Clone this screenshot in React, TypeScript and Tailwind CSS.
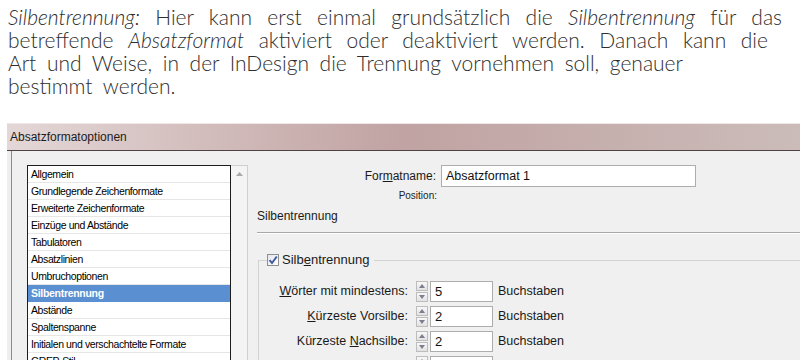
import React from "react";

const listItems = [
  "Allgemein",
  "Grundlegende Zeichenformate",
  "Erweiterte Zeichenformate",
  "Einzüge und Abstände",
  "Tabulatoren",
  "Absatzlinien",
  "Umbruchoptionen",
  "Silbentrennung",
  "Abstände",
  "Spaltenspanne",
  "Initialen und verschachtelte Formate",
  "GREP-Stil",
];

function Spinner() {
  return (
    <div className="flex flex-col w-[12px] h-[21px] gap-[1px]">
      <div className="flex-1 border border-[#bdbdbd] bg-gradient-to-b from-[#f8f8f8] to-[#e2e2e2] flex items-center justify-center">
        <svg width="6" height="4" viewBox="0 0 6 4"><path d="M0 4 L3 0 L6 4 Z" fill="#7a7e90" /></svg>
      </div>
      <div className="flex-1 border border-[#bdbdbd] bg-gradient-to-b from-[#f8f8f8] to-[#e2e2e2] flex items-center justify-center">
        <svg width="6" height="4" viewBox="0 0 6 4"><path d="M0 0 L3 4 L6 0 Z" fill="#7a7e90" /></svg>
      </div>
    </div>
  );
}

function NumRow({ label, value }: { label?: React.ReactNode; value?: string }) {
  return (
    <div className="flex items-center h-[21px]">
      <div className="w-[149px] text-right text-[12.5px] text-[#1a1a1a] whitespace-nowrap">{label}</div>
      <div className="ml-[8px]"><Spinner /></div>
      <div className="ml-[2px] w-[63px] h-[21px] bg-white border border-[#adadad] pl-[4px] text-[13px] leading-[19px] text-[#111]">{value}</div>
      <div className="ml-[5px] text-[12.5px] text-[#1a1a1a]">{label ? "Buchstaben" : ""}</div>
    </div>
  );
}

export default function App() {
  const ui = { fontFamily: '"Liberation Sans", Arial, sans-serif' };
  const prose = { fontFamily: 'Lato, "Open Sans", sans-serif' };
  return (
    <div className="w-[800px] h-[360px] overflow-hidden bg-white relative">
      <div className="h-[123px] pl-[8px] pt-[5px] text-[21px] leading-[23px] font-light text-[#2e2e2e]" style={prose}>
        <div className="w-[774px] text-justify [text-align-last:justify]"><i>Silbentrennung:</i> Hier kann erst einmal grundsätzlich die <i>Silbentrennung</i> für das</div>
        <div className="w-[760px] text-justify [text-align-last:justify]">betreffende <i>Absatzformat</i> aktiviert oder deaktiviert werden. Danach kann die</div>
        <div className="w-[675px] text-justify [text-align-last:justify]">Art und Weise, in der InDesign die Trennung vornehmen soll, genauer</div>
        <div className="whitespace-nowrap [word-spacing:5px]">bestimmt werden.</div>
      </div>

      <div className="ml-[7px]" style={ui}>
        <div className="h-[27px] bg-gradient-to-r from-[#e4d7d7] via-[#c0a3a2] to-[#cbbcb9] border-t border-[#efe6e6] flex items-center pl-[3px] text-[12px] text-[#1c1c1c]">
          Absatzformatoptionen
        </div>
        <div className="h-[1px] bg-[#4f4242]" />
        <div className="flex h-[220px]">
          <div className="w-[4px] bg-[#efeded]" />
          <div className="flex-1 flex border-l border-[#8c8c8c] bg-[#f0f0f0]">
            <div className="pl-[15px] pt-[14px] flex w-[246px] shrink-0">
              <div className="w-[204px] border border-[#1e1e1e] bg-white h-[240px] overflow-hidden">
                {listItems.map((it, i) => (
                  <div
                    key={it}
                    className={
                      i === 7
                        ? "h-[17px] pl-[3px] text-[10.5px] tracking-[-0.3px] leading-[17px] bg-[#5a8fd1] text-white font-bold"
                        : "h-[17px] pl-[3px] text-[10.5px] tracking-[-0.4px] leading-[16px] text-black border-b border-[#e6e6e6]"
                    }
                  >
                    {it}
                  </div>
                ))}
              </div>
              <div className="w-[17px] h-[240px] bg-[#f4f4f4] border-t border-r border-[#cfcfcf] flex justify-center pt-[6px]">
                <svg width="7" height="4" viewBox="0 0 7 4"><path d="M0 4 L3.5 0 L7 4 Z" fill="#a8a8a8" /></svg>
              </div>
            </div>
            <div className="ml-[-1px] flex-1 flex flex-col pt-[14px]">
              <div className="flex items-center h-[22px]">
                <div className="w-[179px] text-right text-[12px] text-[#1a1a1a]">For<span className="underline">m</span>atname:</div>
                <div className="ml-[5px] w-[255px] h-[22px] bg-white border border-[#adadad] pl-[4px] text-[12.5px] leading-[20px] text-[#111]">Absatzformat 1</div>
              </div>
              <div className="mt-[2px] h-[14px] w-[180px] text-right text-[10px] leading-[14px] text-[#222]">Position:</div>
              <div className="mt-[3px] h-[20px] text-[12px] leading-[20px] text-[#1a1a1a]">Silbentrennung</div>
              <div className="mt-[6px] border-t border-[#a8a8a8] border-b border-b-white" />
              <fieldset className="mt-[19px] ml-[1px] border-t border-l border-[#d3d3d3] flex-1">
                <legend className="ml-[8px] pr-[5px] flex items-center h-[14px]">
                  <span className="w-[12px] h-[12px] border border-[#8e8f8f] bg-gradient-to-br from-[#e4e6ee] to-[#ffffff] flex items-center justify-center">
                    <svg width="10" height="10" viewBox="0 0 10 10"><path d="M1.5 5.2 L4 8 L8.8 1.5" stroke="#45599e" strokeWidth="2" fill="none" /></svg>
                  </span>
                  <span className="ml-[3px] text-[13px] text-[#1a1a1a]">Silb<span className="underline">e</span>ntrennung</span>
                </legend>
                <div className="mt-[14px] flex flex-col gap-[4px]">
                  <NumRow label={<><span className="underline">W</span>örter mit mindestens:</>} value="5" />
                  <NumRow label={<><span className="underline">K</span>ürzeste Vorsilbe:</>} value="2" />
                  <NumRow label={<>Kürzeste <span className="underline">N</span>achsilbe:</>} value="2" />
                  <NumRow />
                </div>
              </fieldset>
            </div>
          </div>
        </div>
      </div>
    </div>
  );
}
